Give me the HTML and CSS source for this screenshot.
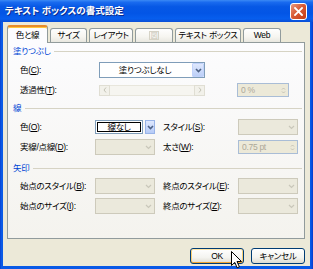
FILE: index.html
```html
<!DOCTYPE html>
<html lang="ja">
<head>
<meta charset="utf-8">
<title>テキスト ボックスの書式設定</title>
<link rel="stylesheet" href="styles.css">
</head>
<body>
<div class="window">
  <div class="titlebar">
    <span class="title">テキスト ボックスの書式設定</span>
    <span class="close"><svg width="9" height="9" viewBox="0 0 9 9"><path d="M1 1L8 8M8 1L1 8" stroke="#fff" stroke-width="1.8" stroke-linecap="square"/></svg></span>
  </div>
  <div class="client">
    <div class="tabs">
      <div class="tab active t1">色と線</div>
      <div class="tab t2">サイズ</div>
      <div class="tab t3">レイアウト</div>
      <div class="tab off t4"><span class="pic">図</span></div>
      <div class="tab t5">テキスト ボックス</div>
      <div class="tab t6">Web</div>
    </div>
    <div class="panel">
      <div class="sec">塗りつぶし</div>
      <div class="grid fill">
        <span class="lbl">色(<u>C</u>):</span>
        <div class="combo">
          <span class="val">塗りつぶしなし</span>
          <span class="dbtn"><svg width="7" height="5" viewBox="0 0 7 5"><path d="M1 1L3.5 3.5L6 1" fill="none" stroke="#4d6185" stroke-width="1.6"/></svg></span>
        </div>
        <span class="lbl">透過性(<u>T</u>):</span>
        <div class="slider">
          <span class="sb"><svg width="4" height="6" viewBox="0 0 4 6"><path d="M3 0.5L1 3L3 5.5" fill="none" stroke="#c4c2b5" stroke-width="1"/></svg></span>
          <span class="sb"><svg width="4" height="6" viewBox="0 0 4 6"><path d="M1 0.5L3 3L1 5.5" fill="none" stroke="#c4c2b5" stroke-width="1"/></svg></span>
        </div>
        <div class="spin c4"><span>0 %</span>
          <span class="arrows"><svg width="5" height="9" viewBox="0 0 5 9"><path d="M1 3.5L2.5 2L4 3.5M1 5.5L2.5 7L4 5.5" fill="none" stroke="#c4c2b5" stroke-width="1"/></svg></span>
        </div>
      </div>

      <div class="sec s2">線</div>
      <div class="grid line">
        <span class="lbl">色(<u>O</u>):</span>
        <div class="colorpick">
          <span class="swatch"><span>線なし</span></span>
          <span class="abtn"><svg width="7" height="5" viewBox="0 0 7 5"><path d="M1 1L3.5 3.5L6 1" fill="none" stroke="#4d6185" stroke-width="1.6"/></svg></span>
        </div>
        <span class="lbl l2">スタイル(<u>S</u>):</span>
        <div class="combo off"><span class="val"></span><span class="dbtn"><svg width="7" height="5" viewBox="0 0 7 5"><path d="M1 1L3.5 3.5L6 1" fill="none" stroke="#c9c7ba" stroke-width="1.2"/></svg></span></div>

        <span class="lbl">実線/点線(<u>D</u>):</span>
        <div class="combo off"><span class="val"></span><span class="dbtn"><svg width="7" height="5" viewBox="0 0 7 5"><path d="M1 1L3.5 3.5L6 1" fill="none" stroke="#c9c7ba" stroke-width="1.2"/></svg></span></div>
        <span class="lbl l2">太さ(<u>W</u>):</span>
        <div class="spin"><span>0.75 pt</span>
          <span class="arrows"><svg width="5" height="9" viewBox="0 0 5 9"><path d="M1 3.5L2.5 2L4 3.5M1 5.5L2.5 7L4 5.5" fill="none" stroke="#c4c2b5" stroke-width="1"/></svg></span>
        </div>
      </div>

      <div class="sec s3">矢印</div>
      <div class="grid line arrow">
        <span class="lbl">始点のスタイル(<u>B</u>):</span>
        <div class="combo off"><span class="val"></span><span class="dbtn"><svg width="7" height="5" viewBox="0 0 7 5"><path d="M1 1L3.5 3.5L6 1" fill="none" stroke="#c9c7ba" stroke-width="1.2"/></svg></span></div>
        <span class="lbl l2">終点のスタイル(<u>E</u>):</span>
        <div class="combo off"><span class="val"></span><span class="dbtn"><svg width="7" height="5" viewBox="0 0 7 5"><path d="M1 1L3.5 3.5L6 1" fill="none" stroke="#c9c7ba" stroke-width="1.2"/></svg></span></div>

        <span class="lbl">始点のサイズ(<u>I</u>):</span>
        <div class="combo off"><span class="val"></span><span class="dbtn"><svg width="7" height="5" viewBox="0 0 7 5"><path d="M1 1L3.5 3.5L6 1" fill="none" stroke="#c9c7ba" stroke-width="1.2"/></svg></span></div>
        <span class="lbl l2">終点のサイズ(<u>Z</u>):</span>
        <div class="combo off"><span class="val"></span><span class="dbtn"><svg width="7" height="5" viewBox="0 0 7 5"><path d="M1 1L3.5 3.5L6 1" fill="none" stroke="#c9c7ba" stroke-width="1.2"/></svg></span></div>
      </div>
    </div>
    <div class="btnrow">
      <div class="pbtn hot">OK</div>
      <div class="pbtn">キャンセル</div>
    </div>
  </div>
  <svg class="cursor" width="12" height="18" viewBox="0 0 12 18"><path d="M0.5 0.5L0.5 14.5L3.8 11.4L6.2 16.8L8.4 15.8L6 10.5L10.5 10.5Z" fill="#fff" stroke="#000" stroke-width="1" stroke-linejoin="miter"/></svg>
</div>
</body>
</html>
```

FILE: styles.css
```css
* { box-sizing: border-box; }
html, body { margin: 0; padding: 0; }
body {
  width: 313px;
  height: 269px;
  overflow: hidden;
  background: #fff;
  font-family: "Liberation Sans", "Noto Sans CJK JP", sans-serif;
  font-size: 8.5px;
  letter-spacing: -0.3px;
  line-height: 1;
  color: #000;
  font-feature-settings: "palt";
}
u { text-decoration: underline; text-underline-offset: 1px; }

.window {
  position: relative;
  width: 313px;
  height: 269px;
  display: flex;
  flex-direction: column;
  padding: 0 3px 3px;
  background: linear-gradient(to right, #0838c8, #0a5ae6 1px, #0758e8 311px, #0838c8);
}
.titlebar {
  height: 22px;
  margin: 0 -3px;
  padding: 0 6px 0 5px;
  display: flex;
  align-items: center;
  justify-content: space-between;
  background: linear-gradient(#3b8af5 0%, #1a6bef 10%, #0758e5 30%, #0355e6 60%, #075eee 85%, #0a4fd6 100%);
}
.title {
  color: #fff;
  font-weight: bold;
  font-size: 9.5px;
  letter-spacing: 0;
  text-shadow: 1px 1px 0 #0a2a8a;
}
.close {
  width: 17px;
  height: 17px;
  border: 1px solid #fff;
  border-radius: 3px;
  background: linear-gradient(135deg, #ea9a80, #d95b36 45%, #c33c16);
  display: flex;
  align-items: center;
  justify-content: center;
}

.client {
  flex: 1;
  background: #ece9d8;
  display: flex;
  flex-direction: column;
}
.tabs {
  height: 20px;
  padding-left: 4px;
  display: flex;
  align-items: flex-end;
}
.tab {
  height: 14px;
  margin-left: 2px;
  border: 1px solid #919b9c;
  border-bottom: none;
  border-radius: 3px 3px 0 0;
  background: linear-gradient(#fefefe, #f6f5f0 60%, #e8e7e0);
  display: flex;
  align-items: center;
  justify-content: center;
  white-space: nowrap;
}
.tab.active {
  height: 18px;
  margin-bottom: -1px;
  margin-left: 0;
  background: #fcfcfe;
  border-top: 2px solid #e68b2c;
  box-shadow: inset 0 1px 0 #ffc83c;
  position: relative;
  z-index: 1;
  padding-top: 1px;
}
.t1 { width: 41px; }
.t2 { width: 37px; }
.t3 { width: 44px; }
.t4 { width: 38px; }
.t5 { width: 66px; }
.t6 { width: 38px; }
.tab.off .pic {
  color: #c8c5b8;
  border: 1px solid #d6d3c6;
  padding: 0 1px;
  font-size: 7px;
}

.panel {
  margin: 0 5px 0 4px;
  height: 197px;
  border: 1px solid #919b9c;
  background: linear-gradient(#fcfcfe, #f4f3ee);
  padding: 3px 2px 0 5px;
}
.sec {
  height: 10px;
  display: flex;
  align-items: center;
  color: #0046d5;
}
.sec::after {
  content: "";
  flex: 1;
  height: 1px;
  margin-left: 4px;
  background: #d6d3c4;
}
.sec.s2 { margin-top: 5px; }
.sec.s3 { margin-top: 8px; }

.grid {
  display: grid;
  grid-auto-rows: 16px;
  row-gap: 4px;
  align-items: center;
  padding-left: 7px;
  margin-top: 6px;
}
.grid.fill { grid-template-columns: 79px 106px 32px 52px; }
.grid.line { grid-template-columns: 75px 60px 83px 60px; }
.grid.arrow { margin-top: 5px; }
.fill .lbl { grid-column: 1; }
.fill .c4 { grid-column: 4; }
.lbl { white-space: nowrap; }
.lbl.l2 { padding-left: 8px; }

.combo {
  height: 16px;
  border: 1px solid #7f9db9;
  background: #fff;
  display: flex;
  align-items: center;
}
.combo .val { flex: 1; text-align: center; padding-right: 2px; }
.dbtn {
  width: 12px;
  height: 14px;
  background: linear-gradient(#dfe8fd, #bccff8);
  border: 1px solid #c1d2fb;
  border-radius: 1px;
  display: flex;
  align-items: center;
  justify-content: center;
}
.combo.off {
  border-color: #cdcabb;
  background: #ebe9dc;
}
.combo.off .dbtn { background: none; border-color: transparent; }

.slider {
  height: 11px;
  display: flex;
  justify-content: space-between;
  background: #f6f5f0;
  border-top: 1px solid #e8e6dc;
  border-bottom: 1px solid #e8e6dc;
}
.sb {
  width: 11px;
  height: 11px;
  margin-top: -1px;
  border: 1px solid #e0ded3;
  background: #f2f1ea;
  display: flex;
  align-items: center;
  justify-content: center;
}

.spin {
  height: 14px;
  border: 1px solid #a9bdd6;
  background: #ece9d8;
  display: flex;
  align-items: center;
  color: #aca899;
  padding-left: 3px;
}
.spin .arrows {
  margin-left: auto;
  width: 10px;
  height: 12px;
  display: flex;
  align-items: center;
  justify-content: center;
}

.colorpick {
  height: 14px;
  display: flex;
  gap: 2px;
}
.swatch {
  width: 48px;
  border: 1px solid #7f9db9;
  background: #fff;
  padding: 1px;
  display: flex;
}
.swatch span {
  flex: 1;
  border: 1px solid #000;
  display: flex;
  align-items: center;
  justify-content: center;
}
.abtn {
  width: 10px;
  background: linear-gradient(#dfe8fd, #b6cbf7);
  border: 1px solid #99b4e8;
  display: flex;
  align-items: center;
  justify-content: center;
}

.btnrow {
  margin-top: 9px;
  padding-right: 5px;
  display: flex;
  justify-content: flex-end;
  gap: 7px;
}
.pbtn {
  width: 54px;
  height: 16px;
  border: 1px solid #003c74;
  border-radius: 3px;
  background: linear-gradient(#ffffff, #f4f4f0 60%, #dedbd0);
  display: flex;
  align-items: center;
  justify-content: center;
}
.pbtn.hot {
  box-shadow: inset 0 1px 0 #ffe6a8, inset 0 -1px 0 #f2a532, inset 1px 0 0 #fbcf72, inset -1px 0 0 #fbcf72;
}
.cursor {
  position: absolute;
  left: 231px;
  top: 251px;
}
```
